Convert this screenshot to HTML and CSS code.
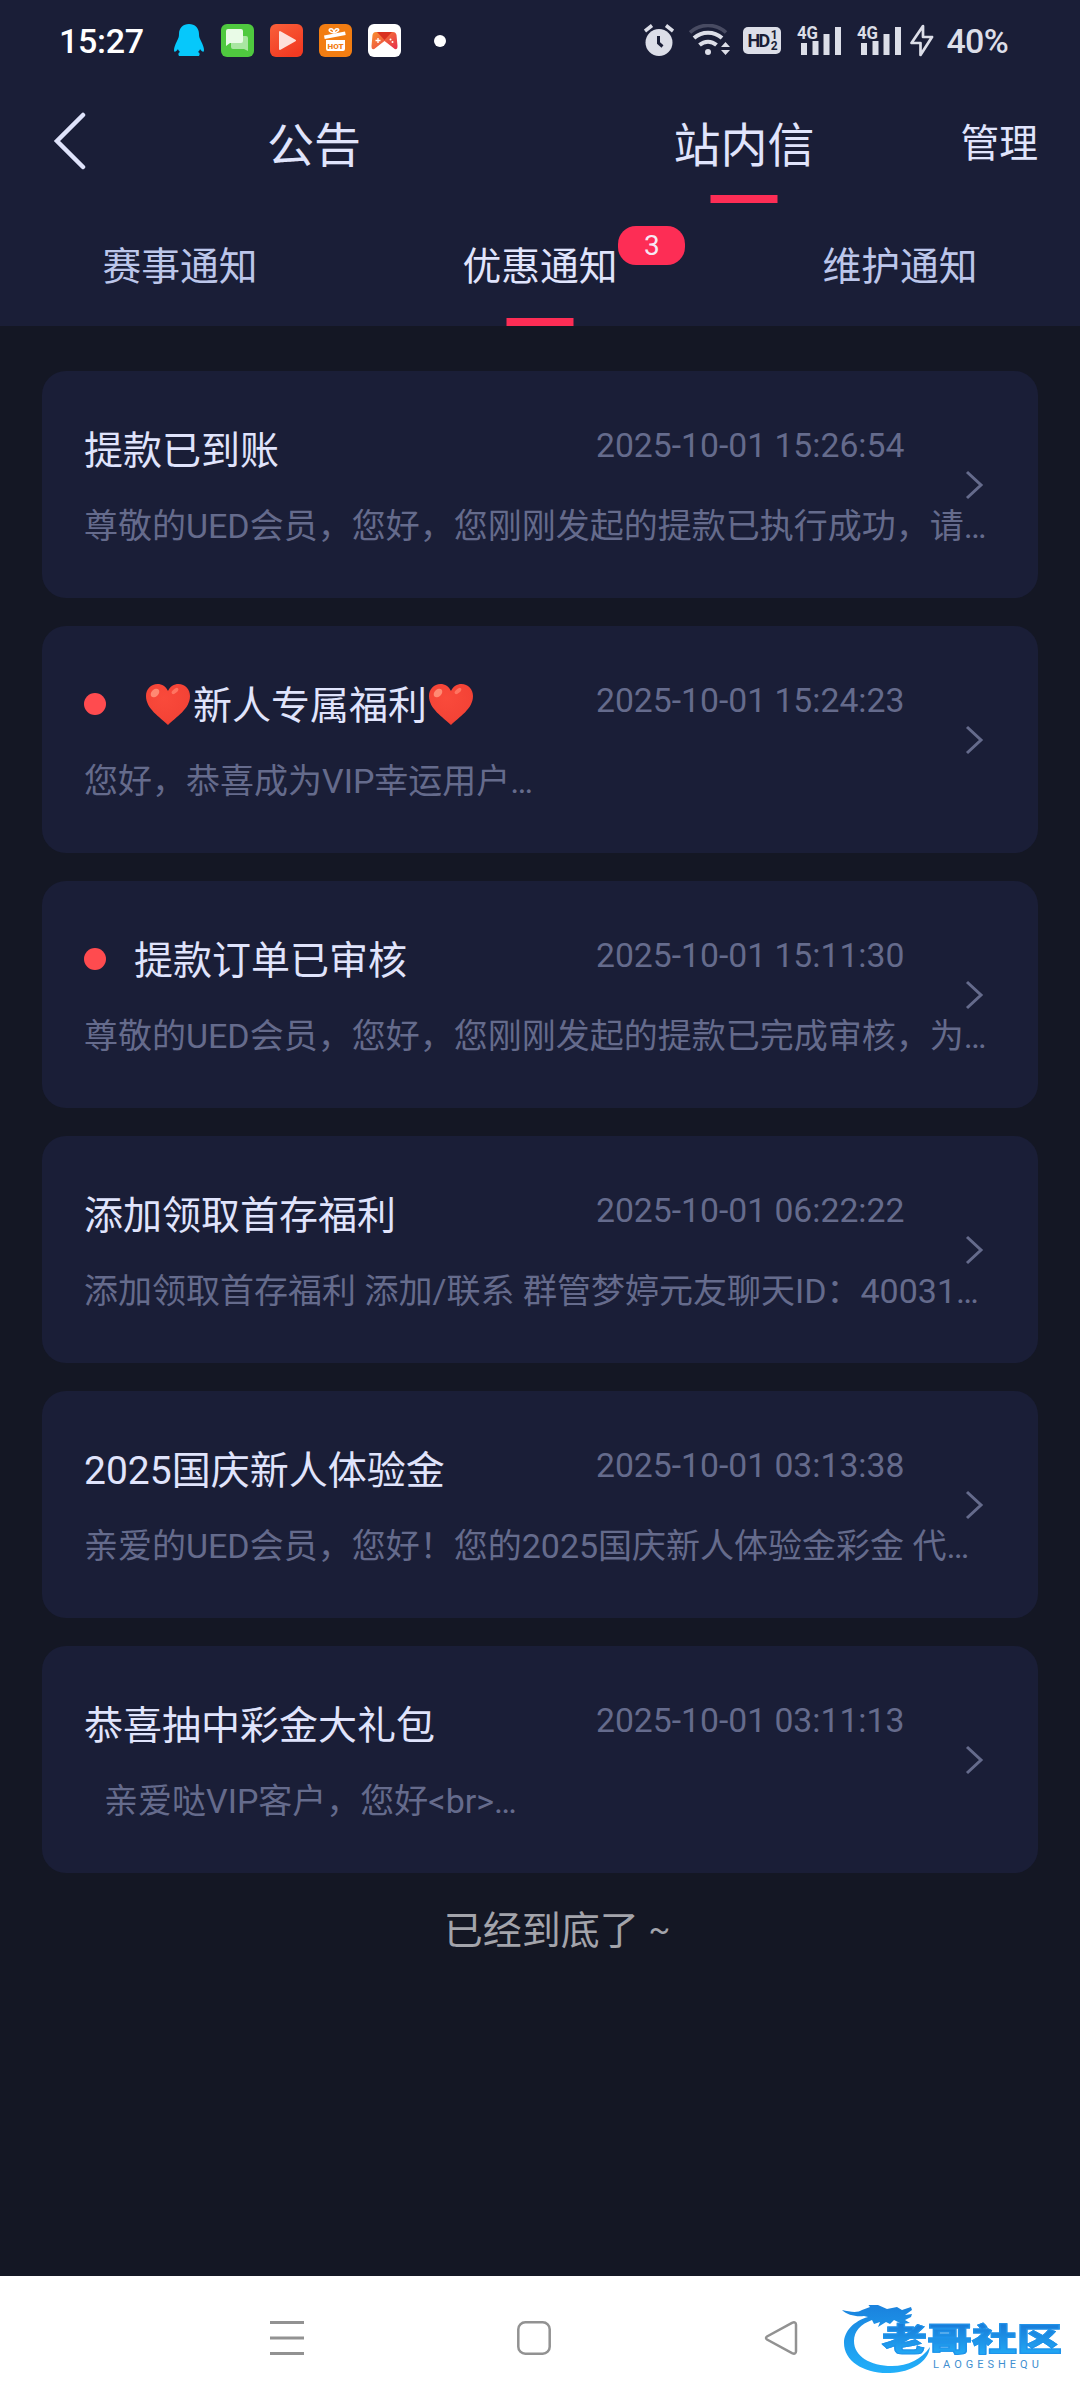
FILE: index.html
```html
<!DOCTYPE html>
<html lang="zh-CN">
<head>
    <meta charset="UTF-8">
    <meta name="viewport" content="width=device-width, initial-scale=1.0">
    <title>站内信</title>
    <link rel="stylesheet" href="styles.css">
</head>
<body>
    <div class="header">
        <div class="status-bar">
            <span class="time">15:27</span>
            <div class="app-icons">
                <svg class="qq" width="30" height="33" viewBox="0 0 30 33">
                    <path fill="#06c8fb" d="M15 0C9 0 5 4 5 10c0 3-.5 4-2 7-2 4-3 7-3 9 0 3 2 2 4-1 0 1 1 2 2 3-2 1-2 2-1 4h20c1-2 1-3-1-4 1-1 2-2 2-3 2 3 4 4 4 1 0-2-1-5-3-9-1.500-3-2-4-2-7C25 4 21 0 15 0z"/>
                </svg>
                <svg width="33" height="33" viewBox="0 0 33 33">
                    <rect width="33" height="33" rx="6" fill="#4fc93f"/>
                    <path fill="#a9e6a2" d="M12 12h13a2 2 0 0 1 2 2v13l-4-2H12a2 2 0 0 1-2-2v-9a2 2 0 0 1 2-2z"/>
                    <path fill="#e9fbe7" d="M7 5h13a2 2 0 0 1 2 2v10a2 2 0 0 1-2 2H9l-4 3V7a2 2 0 0 1 2-2z"/>
                </svg>
                <svg width="33" height="33" viewBox="0 0 33 33">
                    <defs>
                        <linearGradient id="video" x1="0" y1="0" x2="0.600" y2="1">
                            <stop offset="0" stop-color="#f9603a"/>
                            <stop offset="1" stop-color="#f23a22"/>
                        </linearGradient>
                    </defs>
                    <rect width="33" height="33" rx="6" fill="url(#video)"/>
                    <path fill="#fde0da" stroke="#fde0da" stroke-width="2" stroke-linejoin="round" d="M10 8v17l15-8.500z"/>
                </svg>
                <svg width="33" height="33" viewBox="0 0 33 33">
                    <rect width="33" height="33" rx="6" fill="#f27d12"/>
                    <path fill="#fff" d="M5 11.500l21-4 .7 3.500-21 4zM7 16h19v9a2 2 0 0 1-2 2H9a2 2 0 0 1-2-2z"/>
                    <path fill="none" stroke="#fff" stroke-width="1.600" d="M15 9c-4-.5-6-3-4-4s4 1 4 4c0-3 2-5 4-4s-1 3-4 4z"/>
                    <text x="16.500" y="24.500" class="hot">HOT</text>
                </svg>
                <svg width="33" height="33" viewBox="0 0 33 33">
                    <defs>
                        <linearGradient id="game" x1="0" y1="0" x2="1" y2="0.800">
                            <stop offset="0" stop-color="#f9922f"/>
                            <stop offset="1" stop-color="#e8364a"/>
                        </linearGradient>
                    </defs>
                    <rect width="33" height="33" rx="6" fill="#fff"/>
                    <path fill="url(#game)" d="M8 8h17c2 0 3 1 3.500 3l1 11c0 4-2 4-4 2l-9-7-9 7c-2 2-4 2-4-2l1-11C5 9 6 8 8 8z"/>
                    <path fill="#d9301f" d="M9 8h15l-7.500 8z"/>
                    <path stroke="#fff" stroke-width="1.300" d="M7.500 16.500h5M10 14v5"/>
                    <circle cx="22.500" cy="15.500" r="1" fill="#fff"/>
                    <circle cx="24.500" cy="18" r="1" fill="#fff"/>
                </svg>
            </div>
            <span class="more-dot"></span>
            <div class="system-icons">
                <svg class="alarm" width="30" height="33" viewBox="0 0 30 33">
                    <circle cx="15" cy="18.500" r="13.500" fill="#dcdee8"/>
                    <path d="M1 7l7-5.500M29 7l-7-5.500" stroke="#dcdee8" stroke-width="3.500"/>
                    <path d="M14.500 12v7l4 3.500" fill="none" stroke="#1a1e37" stroke-width="3"/>
                </svg>
                <svg class="wifi" width="42" height="33" viewBox="0 0 42 33">
                    <path d="M1 8.500C11-1 27-1 37 8.500" fill="none" stroke="#484b62" stroke-width="3.500"/>
                    <path d="M5 14c8-7 20-7 28 0M10.500 21c5-4.500 12-4.500 17 0" fill="none" stroke="#dcdee8" stroke-width="4"/>
                    <circle cx="19" cy="28" r="3" fill="#dcdee8"/>
                    <path d="M32 23l4.500-5 4.500 5zM32 26h9l-4.500 5z" fill="#dcdee8"/>
                </svg>
                <span class="hd">HD<span class="hd-num"><i>1</i><i>2</i></span></span>
                <svg class="signal" width="44" height="33" viewBox="0 0 44 33">
                    <text x="0" y="14.500" class="net" textLength="21" lengthAdjust="spacingAndGlyphs">4G</text>
                    <path d="M7 19v12M18.500 17v14M29.500 10v21M41 3v28" stroke="#dcdee8" stroke-width="6"/>
                </svg>
                <svg class="signal" width="44" height="33" viewBox="0 0 44 33">
                    <text x="0" y="14.500" class="net" textLength="21" lengthAdjust="spacingAndGlyphs">4G</text>
                    <path d="M7 19v12M18.500 17v14M29.500 10v21M41 3v28" stroke="#dcdee8" stroke-width="6"/>
                </svg>
                <svg class="bolt" width="24" height="33" viewBox="0 0 24 33">
                    <path d="M13 2L1.500 19h9v12L22 13h-9z" fill="none" stroke="#dcdee8" stroke-width="2.700" stroke-linejoin="round"/>
                </svg>
                <span class="battery">40%</span>
            </div>
        </div>

        <div class="title-bar">
            <svg class="back" width="34" height="58" viewBox="0 0 34 58">
                <path d="M30 3L4 29l26 26" fill="none" stroke="#dfe3fb" stroke-width="4.500" stroke-linecap="round"/>
            </svg>
            <div class="title-tab">公告</div>
            <div class="title-tab active">站内信</div>
            <div class="manage">管理</div>
        </div>

        <div class="tabs">
            <div class="tab">赛事通知</div>
            <div class="tab active"><span class="label">优惠通知<span class="badge">3</span></span></div>
            <div class="tab">维护通知</div>
        </div>
    </div>

    <div class="list">
        <div class="card">
            <div class="row">
                <div class="title">提款已到账</div>
                <div class="date">2025-10-01 15:26:54</div>
            </div>
            <div class="desc">尊敬的UED会员，您好，您刚刚发起的提款已执行成功，请…</div>
            <svg class="arrow" width="20" height="32" viewBox="0 0 20 32"><path d="M3 3l14 13L3 29"/></svg>
        </div>

        <div class="card">
            <div class="row">
                <div class="title"><span class="dot"></span><svg class="heart first" width="44" height="41" viewBox="0 0 44 41"><use href="#heart"/></svg>新人专属福利<svg class="heart" width="44" height="41" viewBox="0 0 44 41"><use href="#heart"/></svg></div>
                <div class="date">2025-10-01 15:24:23</div>
            </div>
            <div class="desc">您好，恭喜成为VIP幸运用户…</div>
            <svg class="arrow" width="20" height="32" viewBox="0 0 20 32"><path d="M3 3l14 13L3 29"/></svg>
        </div>

        <div class="card">
            <div class="row">
                <div class="title"><span class="dot"></span>提款订单已审核</div>
                <div class="date">2025-10-01 15:11:30</div>
            </div>
            <div class="desc">尊敬的UED会员，您好，您刚刚发起的提款已完成审核，为…</div>
            <svg class="arrow" width="20" height="32" viewBox="0 0 20 32"><path d="M3 3l14 13L3 29"/></svg>
        </div>

        <div class="card">
            <div class="row">
                <div class="title">添加领取首存福利</div>
                <div class="date">2025-10-01 06:22:22</div>
            </div>
            <div class="desc">添加领取首存福利 添加/联系 群管梦婷元友聊天ID：40031…</div>
            <svg class="arrow" width="20" height="32" viewBox="0 0 20 32"><path d="M3 3l14 13L3 29"/></svg>
        </div>

        <div class="card">
            <div class="row">
                <div class="title">2025国庆新人体验金</div>
                <div class="date">2025-10-01 03:13:38</div>
            </div>
            <div class="desc">亲爱的UED会员，您好！您的2025国庆新人体验金彩金 代…</div>
            <svg class="arrow" width="20" height="32" viewBox="0 0 20 32"><path d="M3 3l14 13L3 29"/></svg>
        </div>

        <div class="card">
            <div class="row">
                <div class="title">恭喜抽中彩金大礼包</div>
                <div class="date">2025-10-01 03:11:13</div>
            </div>
            <div class="desc indent">亲爱哒VIP客户，您好&lt;br&gt;…</div>
            <svg class="arrow" width="20" height="32" viewBox="0 0 20 32"><path d="M3 3l14 13L3 29"/></svg>
        </div>

        <div class="end">已经到底了 <span class="tilde">~</span></div>
    </div>

    <div class="nav-bar">
        <svg width="34" height="36" viewBox="0 0 34 36">
            <path d="M0 2.500h34M0 18h34M0 33.500h34" stroke="#929292" stroke-width="3"/>
        </svg>
        <svg width="34" height="36" viewBox="0 0 34 36">
            <rect x="1.300" y="2.300" width="31.400" height="31.400" rx="7" fill="none" stroke="#929292" stroke-width="2.500"/>
        </svg>
        <svg width="34" height="36" viewBox="0 0 34 36">
            <path d="M28 2.800L3 16.500q-2 1.500 0 3L28 33.200q4 1.500 4-2V4.800q0-3.500-4-2z" fill="none" stroke="#929292" stroke-width="2.500"/>
        </svg>
        <!-- 社区水印 -->
        <div class="watermark">
            <svg width="92" height="74" viewBox="0 0 92 74">
                <defs>
                    <linearGradient id="dragon" x1="0" y1="0" x2="0" y2="1">
                        <stop offset="0" stop-color="#1a80dc"/>
                        <stop offset="1" stop-color="#22b0fa"/>
                    </linearGradient>
                </defs>
                <path fill="url(#dragon)" d="M26 12C12 16 2 26 2 38c0 18 20 31 46 30 22-1 38-11 40-26-8 12-22 19-38 19-22 0-38-10-38-25 0-10 7-17 18-21l2 4 6-2-2 5 8-5 4 2 4-4 8 4 8-1-5-3 6-3 1-3-7 1 7-5-1-3-9 3-5-3-10 2-9-4-12-3 4 5-8 3C16 8 8 7 0 5c5 5 14 7 22 6z"/>
            </svg>
            <div class="brand">
                <div class="brand-cn">老哥社区</div>
                <div class="brand-en">LAOGESHEQU</div>
            </div>
        </div>
    </div>

    <svg class="symbols" width="0" height="0">
        <defs>
            <radialGradient id="heartFill" cx="0.400" cy="0.350" r="0.800">
                <stop offset="0" stop-color="#f94a3b"/>
                <stop offset="0.700" stop-color="#f44336"/>
                <stop offset="1" stop-color="#dd352a"/>
            </radialGradient>
            <symbol id="heart" viewBox="0 0 44 41">
                <path fill="url(#heartFill)" d="M22 41C14 33 0 25 0 12 0 5 5 0 11.500 0 16 0 20 2.500 22 7c2-4.500 6-7 10.500-7C39 0 44 5 44 12c0 13-14 21-22 29z"/>
                <ellipse cx="9" cy="9" rx="5" ry="3.500" fill="#ff8a73" transform="rotate(-45 9 9)"/>
                <ellipse cx="29" cy="7" rx="4" ry="2" fill="#ff7461" transform="rotate(-40 29 7)"/>
            </symbol>
        </defs>
    </svg>
</body>
</html>
```
FILE: styles.css
```css
* {
    box-sizing: border-box;
}
body {
    margin: 0;
    height: 2400px;
    display: flex;
    flex-direction: column;
    background: #141724;
    color: #e0e4fc;
    font-family: Roboto, "Noto Sans CJK SC", sans-serif;
    overflow: hidden;
}
svg {
    display: block;
    flex: none;
}
.header {
    height: 326px;
    background: #1a1e37;
}

/* 状态栏 */
.status-bar {
    height: 82px;
    padding: 0 72px 1px 59px;
    display: flex;
    align-items: center;
    color: #fff;
}
.time {
    width: 115px;
    font-size: 34px;
    font-weight: 500;
    letter-spacing: -0.300px;
}
.app-icons {
    display: flex;
    gap: 16px;
}
.qq {
    margin-right: 1px;
}
.hot {
    font-size: 8px;
    font-weight: 900;
    fill: #f27d12;
    text-anchor: middle;
}
.more-dot {
    width: 12px;
    height: 12px;
    margin-left: 33px;
    border-radius: 50%;
    background: #fff;
}
.system-icons {
    margin-left: auto;
    display: flex;
    align-items: center;
    color: #dcdee8;
}
.wifi {
    margin-left: 15px;
}
.hd {
    width: 38px;
    height: 27px;
    margin-left: 12px;
    padding-left: 4px;
    display: flex;
    align-items: center;
    border-radius: 5px;
    background: #dcdee8;
    color: #1a1e37;
    font-size: 18px;
    font-weight: 700;
    letter-spacing: -1.500px;
}
.hd-num {
    display: flex;
    flex-direction: column;
    margin-left: 2px;
    font-size: 12px;
    line-height: 11px;
}
.hd-num i {
    font-style: normal;
}
.net {
    font-size: 19px;
    font-weight: 700;
    fill: #dcdee8;
}
.signal {
    margin-left: 16px;
    overflow: visible;
}
.bolt {
    margin-left: 9px;
}
.battery {
    margin-left: 12px;
    font-size: 34px;
    font-weight: 500;
    letter-spacing: -0.700px;
}

/* 标题栏 */
.title-bar {
    height: 121px;
    display: flex;
    align-items: center;
    position: relative;
}
.back {
    margin: 0 12px 4px 53px;
}
.title-tab {
    width: 430px;
    height: 121px;
    line-height: 127px;
    text-align: center;
    font-size: 47px;
    position: relative;
}
.active::after {
    content: "";
    width: 67px;
    height: 8px;
    background: #fd2d55;
    position: absolute;
    bottom: 0;
    left: 50%;
    transform: translateX(-50%);
}
.manage {
    margin-left: auto;
    margin-right: 42px;
    font-size: 38.800px;
    line-height: 124px;
    padding-top: 2px;
}
.title-tab.active {
    margin-right: -40px;
}

/* 通知分类 */
.tabs {
    height: 123px;
    display: grid;
    grid-template-columns: repeat(3, 1fr);
}
.tab {
    height: 123px;
    position: relative;
    text-align: center;
    font-size: 38.800px;
    line-height: 128px;
    color: #bcc6ea;
}
.tab.active {
    color: #e0e4fc;
}
.label {
    position: relative;
}
.badge {
    position: absolute;
    left: 156px;
    top: -18px;
    width: 67px;
    height: 39px;
    border-radius: 18px;
    background: #fd2d55;
    color: #f6e8f4;
    font-size: 28px;
    line-height: 40px;
}

/* 消息列表 */
.list {
    flex: 1;
    padding: 45px 42px 0;
    display: flex;
    flex-direction: column;
    gap: 28px;
}
.card {
    height: 227px;
    padding: 48px 50px 0 42px;
    border-radius: 24px;
    background: #1a1e37;
    position: relative;
}
.row {
    display: flex;
    height: 60px;
}
.title {
    width: 512px;
    height: 56px;
    display: flex;
    align-items: center;
    font-size: 39px;
    white-space: nowrap;
}
.dot {
    width: 22px;
    height: 22px;
    margin: 4px 28px 0 0;
    border-radius: 50%;
    background: #ff4b4f;
}
.heart {
    margin: 4px 3px 0 2px;
}
.heart.first {
    margin-left: 12px;
}
.date {
    height: 54px;
    line-height: 54px;
    font-size: 33.700px;
    color: #656b8c;
    white-space: nowrap;
}
.desc {
    margin-top: 23px;
    line-height: 49px;
    font-size: 34px;
    color: #656b8c;
    white-space: nowrap;
}
.indent {
    padding-left: 20px;
}
.arrow {
    position: absolute;
    right: 54px;
    top: 98px;
}
.arrow path {
    fill: none;
    stroke: #656b8c;
    stroke-width: 3px;
}
.end {
    margin-top: 2px;
    padding-left: 34px;
    text-align: center;
    font-size: 39px;
    line-height: 56px;
    color: #a3a4ab;
}
.tilde {
    font-size: 32px;
    vertical-align: 4px;
    line-height: 1;
}

/* 底部导航 */
.nav-bar {
    height: 124px;
    padding-left: 270px;
    display: flex;
    align-items: center;
    gap: 213px;
    background: #fff;
    position: relative;
}
.watermark {
    position: absolute;
    left: 842px;
    top: 29px;
    display: flex;
}
.brand {
    margin-left: -52px;
    padding-top: 10px;
}
.brand-cn {
    height: 46px;
    font-family: "Noto Sans CJK SC", sans-serif;
    font-size: 45px;
    font-weight: 900;
    line-height: 46px;
    white-space: nowrap;
    transform: scaleY(0.700);
    color: transparent;
    background: linear-gradient(#1878d6, #22a8f4);
    -webkit-background-clip: text;
    background-clip: text;
    -webkit-text-stroke: 1.500px #1f93ea;
}
.brand-en {
    margin: -2px 0 0 51px;
    font-size: 11px;
    line-height: 11px;
    letter-spacing: 4px;
    color: #3f8fd0;
}
.symbols {
    position: absolute;
}
```
